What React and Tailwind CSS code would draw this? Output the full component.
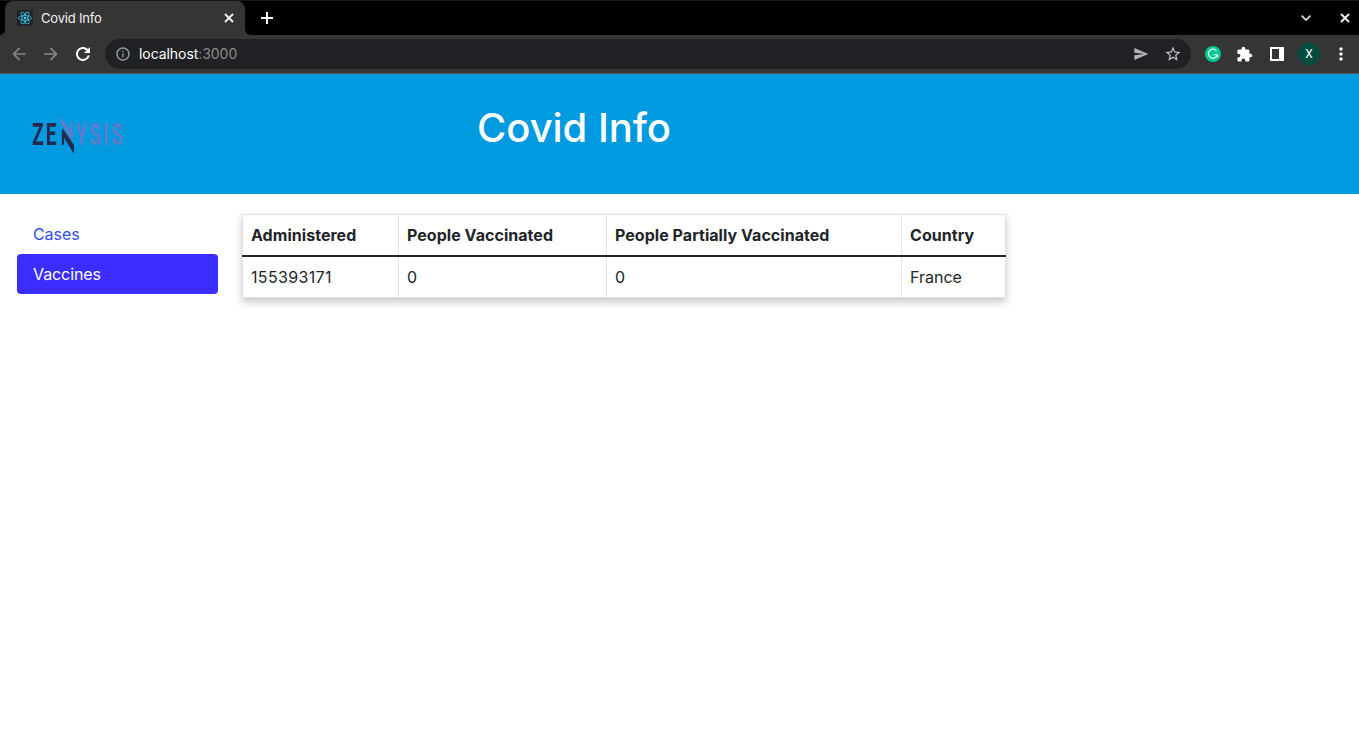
import React from "react";
import { MdArrowBack, MdArrowForward, MdInfoOutline, MdSend, MdStarBorder, MdExtension, MdMoreVert } from "react-icons/md";

function ReactFavicon() {
  return (
    <svg width="16" height="16" viewBox="0 0 16 16" fill="none" stroke="#35b5d3" strokeWidth="0.9">
      <rect width="16" height="16" rx="1" fill="#20232a" stroke="none" />
      <ellipse cx="8" cy="8" rx="6.5" ry="2.5" />
      <ellipse cx="8" cy="8" rx="6.5" ry="2.5" transform="rotate(60 8 8)" />
      <ellipse cx="8" cy="8" rx="6.5" ry="2.5" transform="rotate(120 8 8)" />
      <circle cx="8" cy="8" r="1.2" fill="#61dafb" stroke="none" />
    </svg>
  );
}

function CloseIcon({ size = 10 }) {
  return (
    <svg width={size} height={size} viewBox="0 0 10 10" stroke="#f0f0f0" strokeWidth="2">
      <path d="M1 1l8 8M9 1L1 9" />
    </svg>
  );
}

function TabStrip() {
  return (
    <div className="flex h-[35px] border-t border-[#12161f] bg-black text-white">
      <div className="flex w-[5px] items-end bg-[#353535]">
        <div className="h-full w-full rounded-br-[5px] bg-black" />
      </div>
      <div className="flex w-[240px] bg-black">
        <div className="flex h-[34px] w-full items-center rounded-t-[8px] bg-[#353535] pr-[11px] pl-3">
          <ReactFavicon />
          <span className="ml-2 flex-1 text-[13px] leading-4 tracking-[-0.2px] text-[#f1f1f1]">Covid Info</span>
          <CloseIcon size={10} />
        </div>
      </div>
      <div className="w-[6px] bg-[#353535]">
        <div className="h-full w-full rounded-bl-[6px] bg-black" />
      </div>
      <div className="flex flex-1 items-center justify-between pr-[9px] pl-[10px]">
        <svg width="12" height="12" viewBox="0 0 12 12" stroke="white" strokeWidth="2">
          <path d="M6 0v12M0 6h12" />
        </svg>
        <div className="flex items-center gap-[29px]">
          <svg width="10" height="6" viewBox="0 0 10 6" fill="none" stroke="#e4e4e4" strokeWidth="1.7">
            <path d="M0.6 0.7L5 5L9.4 0.7" />
          </svg>
          <CloseIcon />
        </div>
      </div>
    </div>
  );
}

function Toolbar() {
  return (
    <div className="flex h-[39px] items-center border-b border-[#5a5752] bg-[#353535] pl-[9px]">
      <MdArrowBack size={20} className="text-[#868686]" />
      <MdArrowForward size={20} className="ml-[12px] text-[#868686]" />
      <svg width="14" height="14" viewBox="0 0 14 14" className="ml-[15px]" fill="none" stroke="white" strokeWidth="2">
        <path d="M12.8 8.5A6 6 0 1 1 11.4 2.9L12.2 3.8" />
        <path d="M14 0V6H8z" fill="white" stroke="none" />
      </svg>
      <div className="ml-[15px] flex h-[30px] w-[1086px] items-center rounded-full bg-[#202124] pr-[9px] pl-[10px]">
        <MdInfoOutline size={16} className="text-[#9aa0a6]" />
        <span className="ml-2 flex-1 text-[14px] leading-5 tracking-[-0.06px] text-[#8b8b8b]">
          <span className="text-white">localhost</span>:3000
        </span>
        <MdSend size={16} className="text-[#b4b4b4]" />
        <MdStarBorder size={18} className="ml-[15px] text-[#c4c4c4]" />
      </div>
      <svg width="16" height="16" viewBox="0 0 16 16" className="ml-[14px]" fill="none" stroke="white" strokeWidth="1.1">
        <circle cx="8" cy="8" r="8" fill="#00c994" stroke="none" />
        <path d="M11.5 4.8A4.5 4.5 0 1 0 12.4 8.7H8.6M12.4 8.7V11.4" />
      </svg>
      <MdExtension size={17} className="ml-[15px] text-white" />
      <svg width="14" height="14" viewBox="0 0 14 14" className="ml-[17px]">
        <path fill="white" fillRule="evenodd" d="M0 0h14v14H0zM2 2v10h7V2z" />
      </svg>
      <div className="ml-[14px] flex h-[22px] w-[22px] items-center justify-center rounded-full bg-[#004d40] font-['Roboto',sans-serif] text-[12px] text-white">X</div>
      <MdMoreVert size={20} className="ml-[11px] text-white" />
    </div>
  );
}

function Logo() {
  return (
    <svg width="98" height="42" viewBox="0 0 98 42" fontFamily="Roboto, sans-serif" fontSize="31" role="img" aria-label="Zenysis" className="blur-[0.5px]">
      <defs>
        <linearGradient id="split" x1="0" y1="0.8" x2="1" y2="0.2">
          <stop offset="0.5" stopColor="#252a4c" />
          <stop offset="0.5" stopColor="#5f7ccb" />
        </linearGradient>
        <clipPath id="diagonal">
          <path d="M31 12L48 36H31zM33 5L47 27V8H41z" />
        </clipPath>
      </defs>
      <text transform="translate(4 31) scale(0.62 1)" letterSpacing="3.5" fontWeight="700" fill="#252a4c">ZE</text>
      <g clipPath="url(#diagonal)">
        <text transform="translate(32.5 31) scale(0.6 1)" fontWeight="500" fill="url(#split)">N</text>
      </g>
      <path d="M34.5 14L46 31V40L35 22z" fill="#252a4c" />
      <path d="M33 3L45 20V28L33 9z" fill="#5f7ccb" />
      <text transform="translate(48 31) scale(0.6 1)" letterSpacing="4.1" fontWeight="700" fill="#5f7ccb">YSIS</text>
    </svg>
  );
}

const columns = ["Administered", "People Vaccinated", "People Partially Vaccinated", "Country"];
const row = ["155393171", "0", "0", "France"];

export default function App() {
  return (
    <div className="flex h-screen flex-col overflow-hidden bg-white font-['Inter',sans-serif]">
      <TabStrip />
      <Toolbar />
      <header className="flex h-[120px] bg-[#009ae1]">
        <div className="w-[477px] pt-[40px] pl-7">
          <Logo />
        </div>
        <h1 className="pt-[30px] text-[40px] leading-[48px] font-medium tracking-[-0.05px] text-white">Covid Info</h1>
      </header>
      <div className="flex items-start gap-6 pt-5 pl-[17px]">
        <nav className="flex w-[201px] flex-col text-[16px] leading-6 tracking-[-0.08px]">
          <a className="px-4 py-2 text-[#2f4fee]">Cases</a>
          <a className="rounded-[4px] bg-[#3b2cff] px-4 py-2 text-white">Vaccines</a>
        </nav>
        <div className="w-[764px] shadow-[0_4px_8px_0_rgba(0,0,0,0.22)]">
          <div className="grid h-[43px] grid-cols-[156px_208px_295px_105px] border-t border-b-2 border-t-[#dee2e6] border-b-[#212529]">
            {columns.map((c) => (
              <div key={c} className="border-l border-[#dee2e6] px-2 pt-2 text-[16px] leading-6 font-bold tracking-[0.04px] whitespace-nowrap text-[#212529] last:border-r">{c}</div>
            ))}
          </div>
          <div className="grid h-[41px] grid-cols-[156px_208px_295px_105px] border-b border-[#dee2e6]">
            {row.map((c, i) => (
              <div key={i} className="border-l border-[#dee2e6] px-2 pt-2 text-[16px] leading-6 text-[#212529] first:tracking-[0.35px] last:border-r">{c}</div>
            ))}
          </div>
        </div>
      </div>
    </div>
  );
}
